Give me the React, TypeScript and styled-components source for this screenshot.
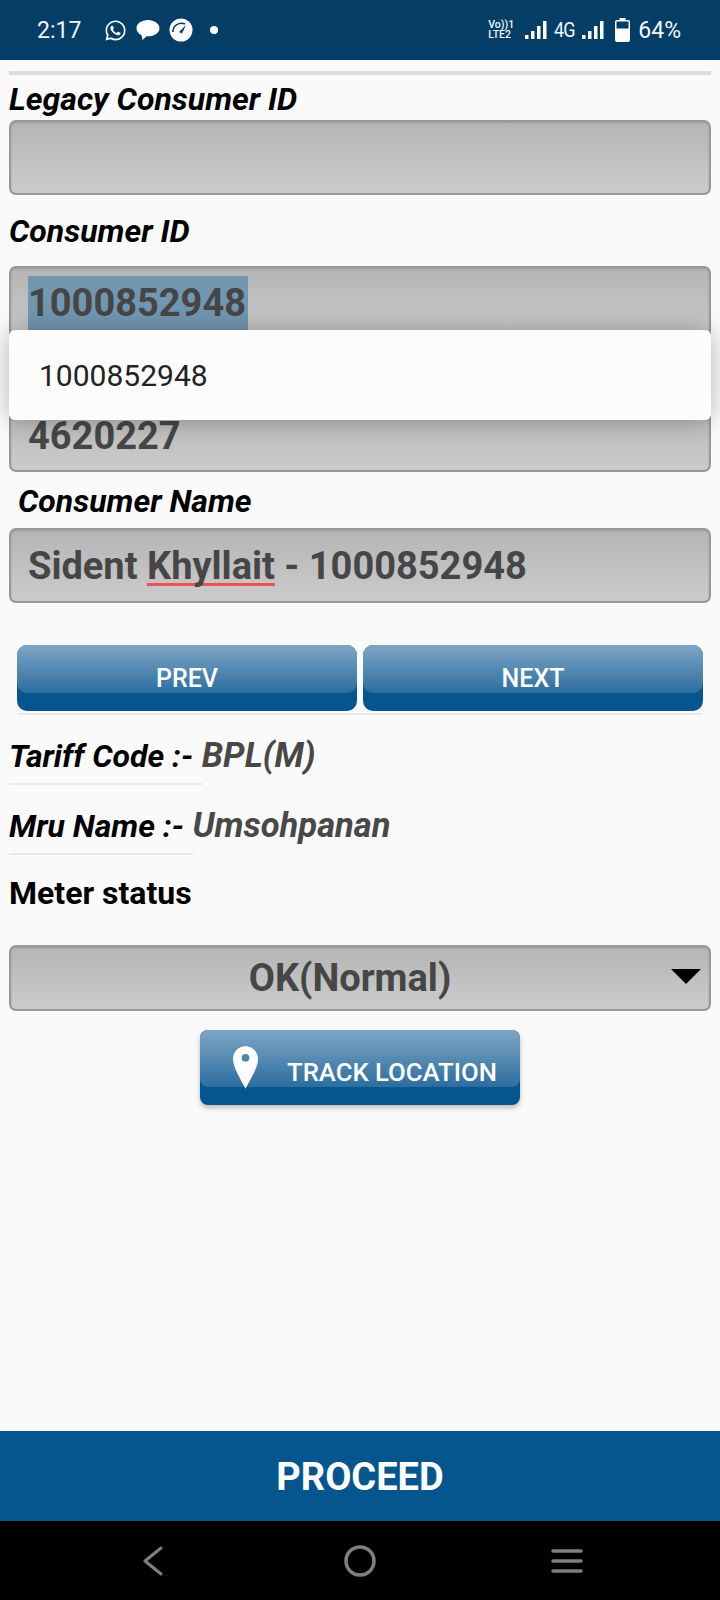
import React from "react";
import styled, { createGlobalStyle } from "styled-components";
import { FaWhatsapp } from "react-icons/fa";

const GlobalStyle = createGlobalStyle`
	html, body {
		margin: 0;
		padding: 0;
		background: #fafafa;
		font-family: Roboto, "Liberation Sans", sans-serif;
	}
`;

const App = () => {
	return (
		<Page>
			<GlobalStyle />
			<StatusBar>
				<Time>2:17</Time>
				<NotifyIcons>
					<FaWhatsapp size={23} color='#fff' />
					<svg width='24' height='22' viewBox='0 0 24 22'>
						<path
							d='M12 1C5.600 1 .5 4.600.5 9.200c0 3 2 5.500 5 7l1 4.800 4-3.800c.5 0 1 .1 1.500.1 6.400 0 11.500-3.600 11.500-8.100S18.400 1 12 1z'
							fill='#fff'
						/>
					</svg>
					<svg width='24' height='24' viewBox='0 0 24 24'>
						<circle cx='12' cy='12' r='11.500' fill='#fff' />
						<path
							d='M4 14a8.500 8.500 0 0 1 12-8'
							fill='none'
							stroke='#043d66'
							strokeWidth='1.500'
						/>
						<path d='M10 14l7-7-4 8.500z' fill='#043d66' />
					</svg>
					<Dot />
				</NotifyIcons>
				<StatusRight>
					<VoLte>
						<span>Vo))1</span>
						<span>LTE2</span>
					</VoLte>
					<SignalBars />
					<NetLabel>4G</NetLabel>
					<SignalBars />
					<BatteryIcon width='15' height='24' viewBox='0 0 15 24'>
						<path
							d='M4.500 0h6v2H13a2 2 0 0 1 2 2v18a2 2 0 0 1-2 2H2a2 2 0 0 1-2-2V4a2 2 0 0 1 2-2h2.500z'
							fill='#fff'
						/>
						<rect x='1.500' y='3.500' width='12' height='7' fill='#043d66' />
					</BatteryIcon>
					<Percent>64%</Percent>
				</StatusRight>
			</StatusBar>

			<Content>
				<TopRule />
				<FieldLabel $top={4}>Legacy Consumer ID</FieldLabel>
				<GreyField />
				<FieldLabel $top={16}>Consumer ID</FieldLabel>
				<AutoWrap>
					<GreyField $top={14}>
						<Selected>1000852948</Selected>
					</GreyField>
					<GreyField $top={56} $bottomText>
						4620227
					</GreyField>
					<Suggestions>
						<SuggestionText>1000852948</SuggestionText>
					</Suggestions>
				</AutoWrap>
				<FieldLabel $top={9} $indent={9}>
					Consumer Name
				</FieldLabel>
				<GreyField $top={6}>
					Sident&nbsp;<Misspelt>Khyllait</Misspelt>&nbsp;- 1000852948
				</GreyField>
				<ButtonRow>
					<GlossButton>
						<GlossFace>PREV</GlossFace>
					</GlossButton>
					<GlossButton>
						<GlossFace>NEXT</GlossFace>
					</GlossButton>
				</ButtonRow>
				<RowRule />
				<InfoLine>
					<b>Tariff Code :-</b> BPL(M)
				</InfoLine>
				<InfoRule $width={193} />
				<InfoLine $top={18}>
					<b>Mru Name :-</b> Umsohpanan
				</InfoLine>
				<InfoRule $width={184} />
				<MeterLabel>Meter status</MeterLabel>
				<SelectBox>
					OK(Normal)
					<Caret />
				</SelectBox>
				<TrackRow>
					<TrackButton>
						<TrackFace>
							<svg width='27' height='45' viewBox='0 0 28 46'>
								<path
									d='M14 1C6.500 1 1 7 1 14.500c0 8 8 21 13 30.500 5-9.500 13-22.500 13-30.500C27 7 21.500 1 14 1z'
									fill='#fff'
								/>
								<circle cx='14' cy='13' r='4' fill='#4f86ae' />
							</svg>
							<TrackText>TRACK LOCATION</TrackText>
						</TrackFace>
					</TrackButton>
				</TrackRow>
			</Content>

			<ProceedBar>PROCEED</ProceedBar>
			<NavBar>
				<svg width='26' height='30' viewBox='0 0 26 30'>
					<path
						d='M18 2L2 15l16 13'
						fill='none'
						stroke='#7f7f7f'
						strokeWidth='3'
						strokeLinecap='round'
						strokeLinejoin='round'
					/>
				</svg>
				<svg width='32' height='32' viewBox='0 0 32 32'>
					<circle cx='16' cy='16' r='14' fill='none' stroke='#7f7f7f' strokeWidth='3.500' />
				</svg>
				<svg width='32' height='26' viewBox='0 0 32 26'>
					<path
						d='M2 3h28M2 13h28M2 23h28'
						fill='none'
						stroke='#7f7f7f'
						strokeWidth='3.500'
						strokeLinecap='round'
					/>
				</svg>
			</NavBar>
		</Page>
	);
};

export default App;

const Page = styled.div`
	width: 720px;
	height: 1600px;
	display: flex;
	flex-direction: column;
	background: #fafafa;
	overflow: hidden;
`;
const StatusBar = styled.div`
	height: 60px;
	flex: none;
	background: #043d66;
	display: flex;
	align-items: center;
	padding: 0 39px 0 37px;
	color: #f2f6f9;
`;
const Time = styled.div`
	font-size: 23px;
	width: 67px;
`;
const NotifyIcons = styled.div`
	display: flex;
	align-items: center;
	gap: 9px;
`;
const Dot = styled.span`
	width: 8px;
	height: 8px;
	border-radius: 50%;
	background: #fff;
	margin-left: 8px;
`;
const StatusRight = styled.div`
	margin-left: auto;
	display: flex;
	align-items: center;
	gap: 9px;
`;
const VoLte = styled.div`
	display: flex;
	flex-direction: column;
	font-size: 10.500px;
	line-height: 10px;
	font-weight: 500;
	width: 24px;
	margin-right: 4px;
`;
const NetLabel = styled.div`
	font-size: 20px;
	width: 19px;
	margin-left: -2px;
	letter-spacing: -1px;
	transform: scaleX(0.9);
	transform-origin: left;
`;
const BatteryIcon = styled.svg`
	margin-left: 2px;
`;
const Percent = styled.div`
	font-size: 23px;
	margin-left: -1px;
`;
const SignalBars = () => (
	<svg width='22' height='20' viewBox='0 0 22 20'>
		<path d='M0 15h3.500v4H0zM6 11h3.500v8H6zM12 6h3.500v13H12zM18 1h3.500v18H18z' fill='#fff' />
	</svg>
);
const Content = styled.div`
	flex: 1;
	padding: 11px 9px 0;
	display: flex;
	flex-direction: column;
`;
const TopRule = styled.div`
	height: 4px;
	background: #dcdcdc;
	flex: none;
`;
const FieldLabel = styled.div<{ $top?: number; $indent?: number }>`
	font-size: 32px;
	line-height: 41px;
	font-weight: 700;
	font-style: italic;
	color: #000;
	margin-top: ${(p) => p.$top ?? 0}px;
	padding-left: ${(p) => p.$indent ?? 0}px;
`;
const GreyField = styled.div<{ $top?: number; $bottomText?: boolean }>`
	height: 75px;
	box-sizing: border-box;
	margin-top: ${(p) => p.$top ?? 0}px;
	flex: none;
	display: flex;
	align-items: ${(p) => (p.$bottomText ? "flex-end" : "center")};
	padding: ${(p) => (p.$bottomText ? "0 17px 12px" : "0 17px")};
	border: 2px solid #989898;
	border-radius: 7px;
	background: linear-gradient(#b5b5b5, #cbcbcb);
	box-shadow: inset 0 1px 2px rgba(0, 0, 0, 0.15);
	color: #464646;
	font-size: 38px;
	font-weight: 700;
	white-space: nowrap;
`;
const Selected = styled.span`
	background: #7297b1;
	line-height: 54px;
	padding-right: 2px;
	margin-top: -2px;
`;
const Misspelt = styled.span`
	text-decoration: underline;
	text-decoration-color: #ee4f4f;
	text-decoration-thickness: 3px;
	text-decoration-skip-ink: none;
	text-underline-offset: 4px;
`;
const AutoWrap = styled.div`
	position: relative;
`;
const Suggestions = styled.div`
	position: absolute;
	left: 0;
	right: 0;
	top: 78px;
	height: 90px;
	background: #fcfcfc;
	border-radius: 6px;
	display: flex;
	align-items: center;
	padding-left: 30px;
	box-shadow: 0 0 24px rgba(0, 0, 0, 0.28);
`;
const SuggestionText = styled.div`
	font-size: 30px;
	color: #222;
`;
const ButtonRow = styled.div`
	display: flex;
	gap: 6px;
	margin-top: 42px;
	padding: 0 8px;
`;
const GlossButton = styled.div`
	flex: 1;
	height: 66px;
	border-radius: 10px;
	background: #05568e;
`;
const GlossFace = styled.div`
	height: 48px;
	border-radius: 10px;
	color: #fff;
	font-size: 25px;
	font-weight: 500;
	line-height: 29px;
	display: flex;
	justify-content: center;
	padding-top: 19px;
	box-sizing: border-box;
	background: linear-gradient(#7ea6c5, #2c6e9f);
`;
const RowRule = styled.div`
	height: 2px;
	margin: 2px 9px 0;
	background: #e8e8e8;
`;
const InfoLine = styled.div<{ $top?: number }>`
	height: 44px;
	font-size: 34.500px;
	line-height: 44px;
	font-style: italic;
	font-weight: 700;
	color: #484848;
	margin-top: ${(p) => p.$top ?? 18}px;
	b {
		color: #000;
		font-size: 32px;
		font-weight: 700;
	}
`;
const InfoRule = styled.div<{ $width: number }>`
	height: 2px;
	width: ${(p) => p.$width}px;
	background: #e8e8e8;
	margin-top: 6px;
`;
const MeterLabel = styled.div`
	font-size: 32px;
	font-weight: 700;
	line-height: 44px;
	color: #000;
	margin-top: 16px;
`;
const SelectBox = styled.div`
	position: relative;
	height: 66px;
	box-sizing: border-box;
	margin-top: 30px;
	padding-right: 20px;
	border: 2px solid #989898;
	border-radius: 7px;
	background: linear-gradient(#b5b5b5, #cbcbcb);
	box-shadow: inset 0 1px 2px rgba(0, 0, 0, 0.15);
	color: #464646;
	font-size: 38px;
	font-weight: 700;
	display: flex;
	align-items: center;
	justify-content: center;
`;
const Caret = styled.span`
	position: absolute;
	right: 8px;
	top: 22px;
	border-left: 15px solid transparent;
	border-right: 15px solid transparent;
	border-top: 15px solid #000;
`;
const TrackRow = styled.div`
	display: flex;
	justify-content: center;
	margin-top: 19px;
`;
const TrackButton = styled.div`
	width: 320px;
	height: 75px;
	border-radius: 8px;
	box-shadow: 0 3px 5px rgba(0, 0, 0, 0.25);
	background: #05568e;
`;
const TrackFace = styled.div`
	height: 57px;
	box-sizing: border-box;
	border-radius: 8px;
	display: flex;
	align-items: flex-start;
	padding: 15px 0 0 32px;
	background: linear-gradient(#7ea6c5, #2c6e9f);
`;
const TrackText = styled.div`
	color: #fff;
	font-size: 25.700px;
	font-weight: 500;
	margin: 12px 0 0 28px;
	white-space: nowrap;
`;
const ProceedBar = styled.div`
	height: 90px;
	flex: none;
	background: #05568e;
	color: #fff;
	font-size: 38px;
	font-weight: 700;
	display: flex;
	align-items: center;
	justify-content: center;
	padding-top: 2px;
	box-sizing: border-box;
`;
const NavBar = styled.div`
	height: 79px;
	flex: none;
	background: #000;
	display: flex;
	align-items: center;
	padding: 0 137px 0 143px;
	justify-content: space-between;
`;
